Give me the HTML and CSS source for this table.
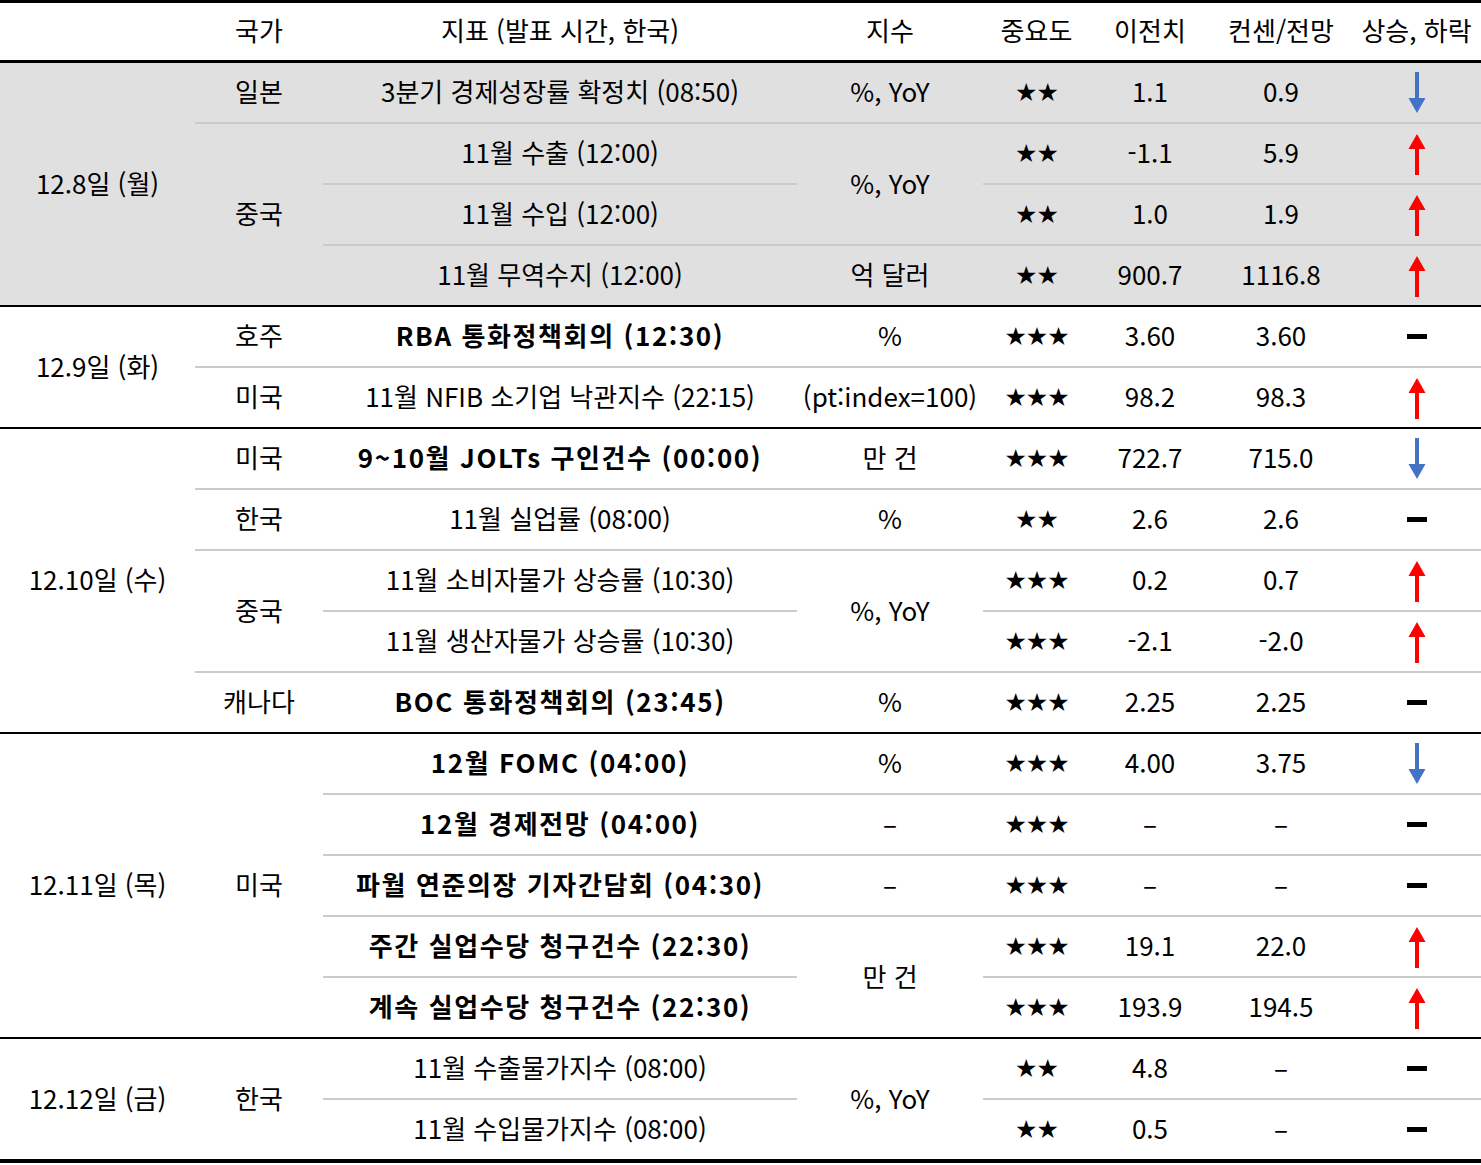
FILE: index.html
```html
<!DOCTYPE html>
<html lang="ko">
<head>
<meta charset="utf-8">
<title>주요 경제지표 일정</title>
<link rel="stylesheet" href="styles.css">
</head>
<body>
<table class="cal">
<colgroup>
<col class="c-date"><col class="c-cty"><col class="c-ind"><col class="c-unit"><col class="c-imp"><col class="c-prev"><col class="c-cons"><col class="c-dir">
</colgroup>
<thead>
<tr><th></th><th>국가</th><th>지표 (발표 시간, 한국)</th><th>지수</th><th>중요도</th><th>이전치</th><th>컨센/전망</th><th>상승, 하락</th></tr>
</thead>
<tbody class="grp gray">
<tr><td rowspan="4" class="date">12.8일 (월)</td><td class="ln">일본</td><td class="ln">3분기 경제성장률 확정치 (08:50)</td><td class="ln">%, YoY</td><td class="ln"><span class="st">★★</span></td><td class="ln">1.1</td><td class="ln">0.9</td><td class="ln"><svg class="ar" viewBox="0 0 18 42" width="18" height="42"><rect x="7" y="0" width="4" height="30" fill="#4472C4"/><polygon points="0.5,26 17.5,26 9,41" fill="#4472C4"/></svg></td></tr>
<tr><td rowspan="3">중국</td><td class="ln">11월 수출 (12:00)</td><td rowspan="2" class="ln">%, YoY</td><td class="ln"><span class="st">★★</span></td><td class="ln">-1.1</td><td class="ln">5.9</td><td class="ln"><svg class="ar" viewBox="0 0 18 42" width="18" height="42"><rect x="7" y="12" width="4" height="30" fill="#FF0000"/><polygon points="0.5,16 17.5,16 9,1" fill="#FF0000"/></svg></td></tr>
<tr><td class="ln">11월 수입 (12:00)</td><td class="ln"><span class="st">★★</span></td><td class="ln">1.0</td><td class="ln">1.9</td><td class="ln"><svg class="ar" viewBox="0 0 18 42" width="18" height="42"><rect x="7" y="12" width="4" height="30" fill="#FF0000"/><polygon points="0.5,16 17.5,16 9,1" fill="#FF0000"/></svg></td></tr>
<tr><td>11월 무역수지 (12:00)</td><td>억 달러</td><td><span class="st">★★</span></td><td>900.7</td><td>1116.8</td><td><svg class="ar" viewBox="0 0 18 42" width="18" height="42"><rect x="7" y="12" width="4" height="30" fill="#FF0000"/><polygon points="0.5,16 17.5,16 9,1" fill="#FF0000"/></svg></td></tr>
</tbody>
<tbody class="grp">
<tr><td rowspan="2" class="date">12.9일 (화)</td><td class="ln">호주</td><td class="ln b">RBA 통화정책회의 (12:30)</td><td class="ln">%</td><td class="ln"><span class="st">★★★</span></td><td class="ln">3.60</td><td class="ln">3.60</td><td class="ln"><span class="dash"></span></td></tr>
<tr><td>미국</td><td>11월 NFIB 소기업 낙관지수 (22:15)</td><td>(pt:index=100)</td><td><span class="st">★★★</span></td><td>98.2</td><td>98.3</td><td><svg class="ar" viewBox="0 0 18 42" width="18" height="42"><rect x="7" y="12" width="4" height="30" fill="#FF0000"/><polygon points="0.5,16 17.5,16 9,1" fill="#FF0000"/></svg></td></tr>
</tbody>
<tbody class="grp">
<tr><td rowspan="5" class="date">12.10일 (수)</td><td class="ln">미국</td><td class="ln b">9~10월 JOLTs 구인건수 (00:00)</td><td class="ln">만 건</td><td class="ln"><span class="st">★★★</span></td><td class="ln">722.7</td><td class="ln">715.0</td><td class="ln"><svg class="ar" viewBox="0 0 18 42" width="18" height="42"><rect x="7" y="0" width="4" height="30" fill="#4472C4"/><polygon points="0.5,26 17.5,26 9,41" fill="#4472C4"/></svg></td></tr>
<tr><td class="ln">한국</td><td class="ln">11월 실업률 (08:00)</td><td class="ln">%</td><td class="ln"><span class="st">★★</span></td><td class="ln">2.6</td><td class="ln">2.6</td><td class="ln"><span class="dash"></span></td></tr>
<tr><td rowspan="2" class="ln">중국</td><td class="ln">11월 소비자물가 상승률 (10:30)</td><td rowspan="2" class="ln">%, YoY</td><td class="ln"><span class="st">★★★</span></td><td class="ln">0.2</td><td class="ln">0.7</td><td class="ln"><svg class="ar" viewBox="0 0 18 42" width="18" height="42"><rect x="7" y="12" width="4" height="30" fill="#FF0000"/><polygon points="0.5,16 17.5,16 9,1" fill="#FF0000"/></svg></td></tr>
<tr><td class="ln">11월 생산자물가 상승률 (10:30)</td><td class="ln"><span class="st">★★★</span></td><td class="ln">-2.1</td><td class="ln">-2.0</td><td class="ln"><svg class="ar" viewBox="0 0 18 42" width="18" height="42"><rect x="7" y="12" width="4" height="30" fill="#FF0000"/><polygon points="0.5,16 17.5,16 9,1" fill="#FF0000"/></svg></td></tr>
<tr><td>캐나다</td><td class="b">BOC 통화정책회의 (23:45)</td><td>%</td><td><span class="st">★★★</span></td><td>2.25</td><td>2.25</td><td><span class="dash"></span></td></tr>
</tbody>
<tbody class="grp">
<tr><td rowspan="5" class="date">12.11일 (목)</td><td rowspan="5">미국</td><td class="ln b">12월 FOMC (04:00)</td><td class="ln">%</td><td class="ln"><span class="st">★★★</span></td><td class="ln">4.00</td><td class="ln">3.75</td><td class="ln"><svg class="ar" viewBox="0 0 18 42" width="18" height="42"><rect x="7" y="0" width="4" height="30" fill="#4472C4"/><polygon points="0.5,26 17.5,26 9,41" fill="#4472C4"/></svg></td></tr>
<tr><td class="ln b">12월 경제전망 (04:00)</td><td class="ln">–</td><td class="ln"><span class="st">★★★</span></td><td class="ln">–</td><td class="ln">–</td><td class="ln"><span class="dash"></span></td></tr>
<tr><td class="ln b">파월 연준의장 기자간담회 (04:30)</td><td class="ln">–</td><td class="ln"><span class="st">★★★</span></td><td class="ln">–</td><td class="ln">–</td><td class="ln"><span class="dash"></span></td></tr>
<tr><td class="ln b">주간 실업수당 청구건수 (22:30)</td><td rowspan="2">만 건</td><td class="ln"><span class="st">★★★</span></td><td class="ln">19.1</td><td class="ln">22.0</td><td class="ln"><svg class="ar" viewBox="0 0 18 42" width="18" height="42"><rect x="7" y="12" width="4" height="30" fill="#FF0000"/><polygon points="0.5,16 17.5,16 9,1" fill="#FF0000"/></svg></td></tr>
<tr><td class="b">계속 실업수당 청구건수 (22:30)</td><td><span class="st">★★★</span></td><td>193.9</td><td>194.5</td><td><svg class="ar" viewBox="0 0 18 42" width="18" height="42"><rect x="7" y="12" width="4" height="30" fill="#FF0000"/><polygon points="0.5,16 17.5,16 9,1" fill="#FF0000"/></svg></td></tr>
</tbody>
<tbody class="grp last">
<tr><td rowspan="2" class="date">12.12일 (금)</td><td rowspan="2">한국</td><td class="ln">11월 수출물가지수 (08:00)</td><td rowspan="2">%, YoY</td><td class="ln"><span class="st">★★</span></td><td class="ln">4.8</td><td class="ln">–</td><td class="ln"><span class="dash"></span></td></tr>
<tr><td>11월 수입물가지수 (08:00)</td><td><span class="st">★★</span></td><td>0.5</td><td>–</td><td><span class="dash"></span></td></tr>
</tbody>
</table>
</body>
</html>
```

FILE: styles.css
```css
html, body {
  margin: 0;
  padding: 0;
  background: #ffffff;
}

body {
  font-family: "Noto Sans CJK KR", "Noto Sans", sans-serif;
  color: #000000;
}

.cal {
  width: 1481px;
  border-collapse: separate;
  border-spacing: 0;
  table-layout: fixed;
  font-size: 26px;
  line-height: 1;
}

.c-date { width: 195px; }
.c-cty { width: 128px; }
.c-ind { width: 474px; }
.c-unit { width: 186px; }
.c-imp { width: 107px; }
.c-prev { width: 120px; }
.c-cons { width: 142px; }
.c-dir { width: 129px; }

.cal th {
  font-weight: 400;
  height: 54px;
  padding: 0 0 3px 0;
  text-align: center;
  vertical-align: middle;
  border-top: 3px solid #000;
  border-bottom: 3px solid #000;
  white-space: nowrap;
}

.cal td {
  height: 56px;
  padding: 0 0 3px 0;
  text-align: center;
  vertical-align: middle;
  white-space: nowrap;
}

.cal td.ln {
  border-bottom: 2px solid #cbcbcb;
}

.grp tr:last-child td,
.grp td[rowspan] {
  border-bottom: 2px solid #000;
}

.grp td.ln[rowspan="2"],
.grp td.ln[rowspan="3"] {
  border-bottom: 2px solid #cbcbcb;
}

.grp tr:last-child td.ln {
  border-bottom: 2px solid #000;
}

.grp.last tr:last-child td,
.grp.last td[rowspan] {
  border-bottom: 4px solid #000;
}

.gray td {
  background: #e0e0e0;
}

.b {
  font-weight: 700;
  letter-spacing: 1.6px;
}

.st {
  font-family: "DejaVu Sans", sans-serif;
  font-size: 25px;
  letter-spacing: -1px;
}

.ar {
  display: block;
  margin: 3px auto 0;
}

.dash {
  display: block;
  width: 20px;
  height: 5px;
  margin: 3px auto 0;
  background: #000;
}
```
